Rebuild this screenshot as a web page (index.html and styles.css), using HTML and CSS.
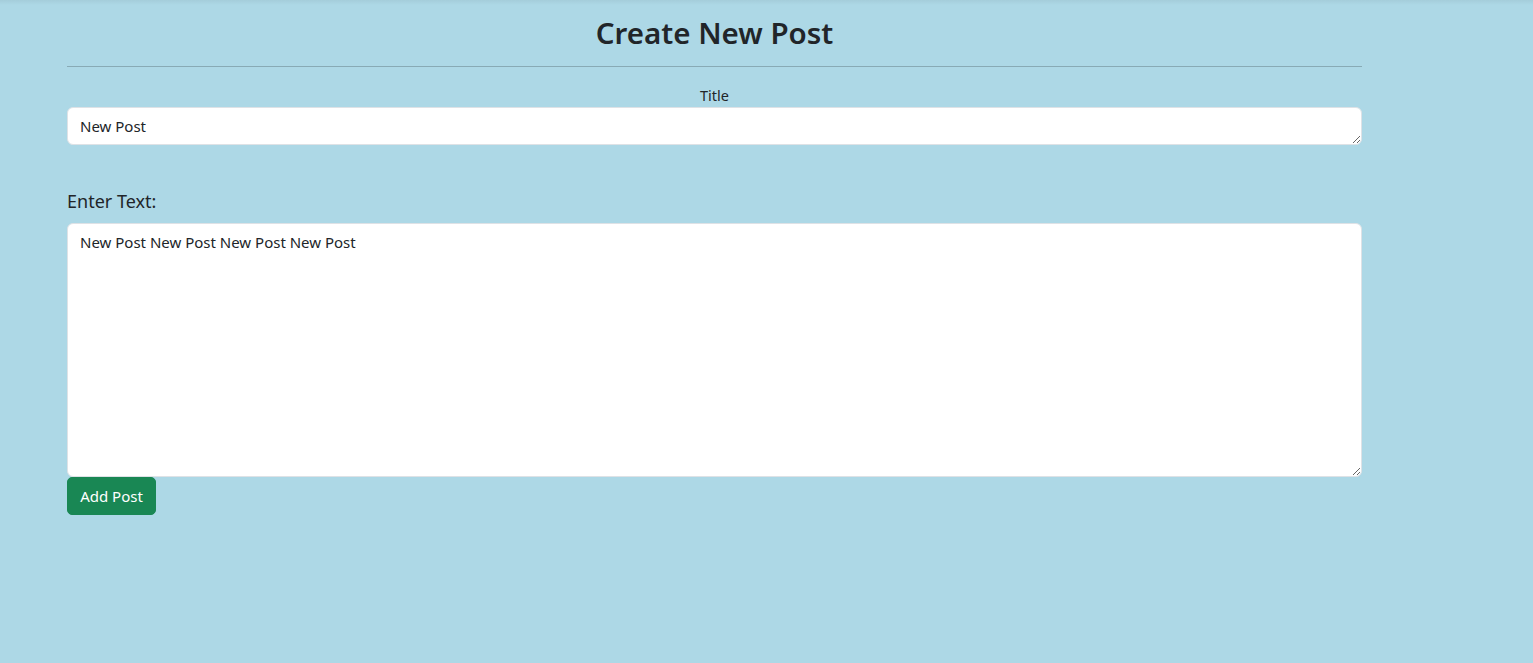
FILE: index.html
```html
<!DOCTYPE html>
<html>
<head>
<meta charset="utf-8">
<link rel="stylesheet" href="styles.css">
</head>
<body>
<div class="topshade"></div>
<main class="page">
  <h2 class="heading">Create New Post</h2>
  <hr class="rule">
  <form class="form">
    <label class="title-label" for="title">Title</label>
    <textarea id="title" class="field title-field" rows="1">New Post</textarea>
    <label class="text-label" for="body">Enter Text:</label>
    <textarea id="body" class="field body-field">New Post New Post New Post New Post</textarea>
    <div><button type="button" class="btn">Add Post</button></div>
  </form>
</main>
</body>
</html>
```
FILE: styles.css
```css
* { box-sizing: border-box; }
html, body { margin: 0; height: 100%; }
body {
  background: #add8e6;
  font-family: "Noto Sans", "Open Sans", sans-serif;
  color: #212529;
  font-size: 15px;
  position: relative;
}
.topshade {
  position: absolute;
  top: 0; left: 0; right: 0;
  height: 5px;
  background: linear-gradient(to bottom, rgba(0,0,0,0.05), rgba(0,0,0,0));
}
.page {
  width: 1295px;
  margin-left: 67px;
  padding-top: 12px;
}
.heading {
  margin: 0;
  text-align: center;
  font-size: 29.5px;
  font-weight: 600;
  line-height: 42px;
}
.rule {
  margin: 12px 0 0;
  border: 0;
  border-top: 1px solid #88aab5;
}
.form { display: flex; flex-direction: column; }
.title-label {
  text-align: center;
  margin-top: 18px;
  line-height: 20px;
  font-size: 14.5px;
}
.field {
  display: block;
  width: 100%;
  font-family: inherit;
  font-size: 15px;
  color: #212529;
  background: #fff;
  border: 1px solid #dee2e6;
  border-radius: 6px;
  padding: 8px 12px;
  line-height: 20px;
  outline: none;
}
.title-field { height: 38px; margin-top: 2px; }
.text-label {
  font-size: 18px;
  margin-top: 44px;
  line-height: 24px;
}
.body-field { height: 254px; margin-top: 10px; }
.btn {
  margin-top: 0;
  background: #198754;
  color: #fff;
  border: 1px solid #198754;
  border-radius: 5px;
  font-family: inherit;
  font-size: 15px;
  height: 38px;
  padding: 0 12px;
  width: 89px;
}
```
